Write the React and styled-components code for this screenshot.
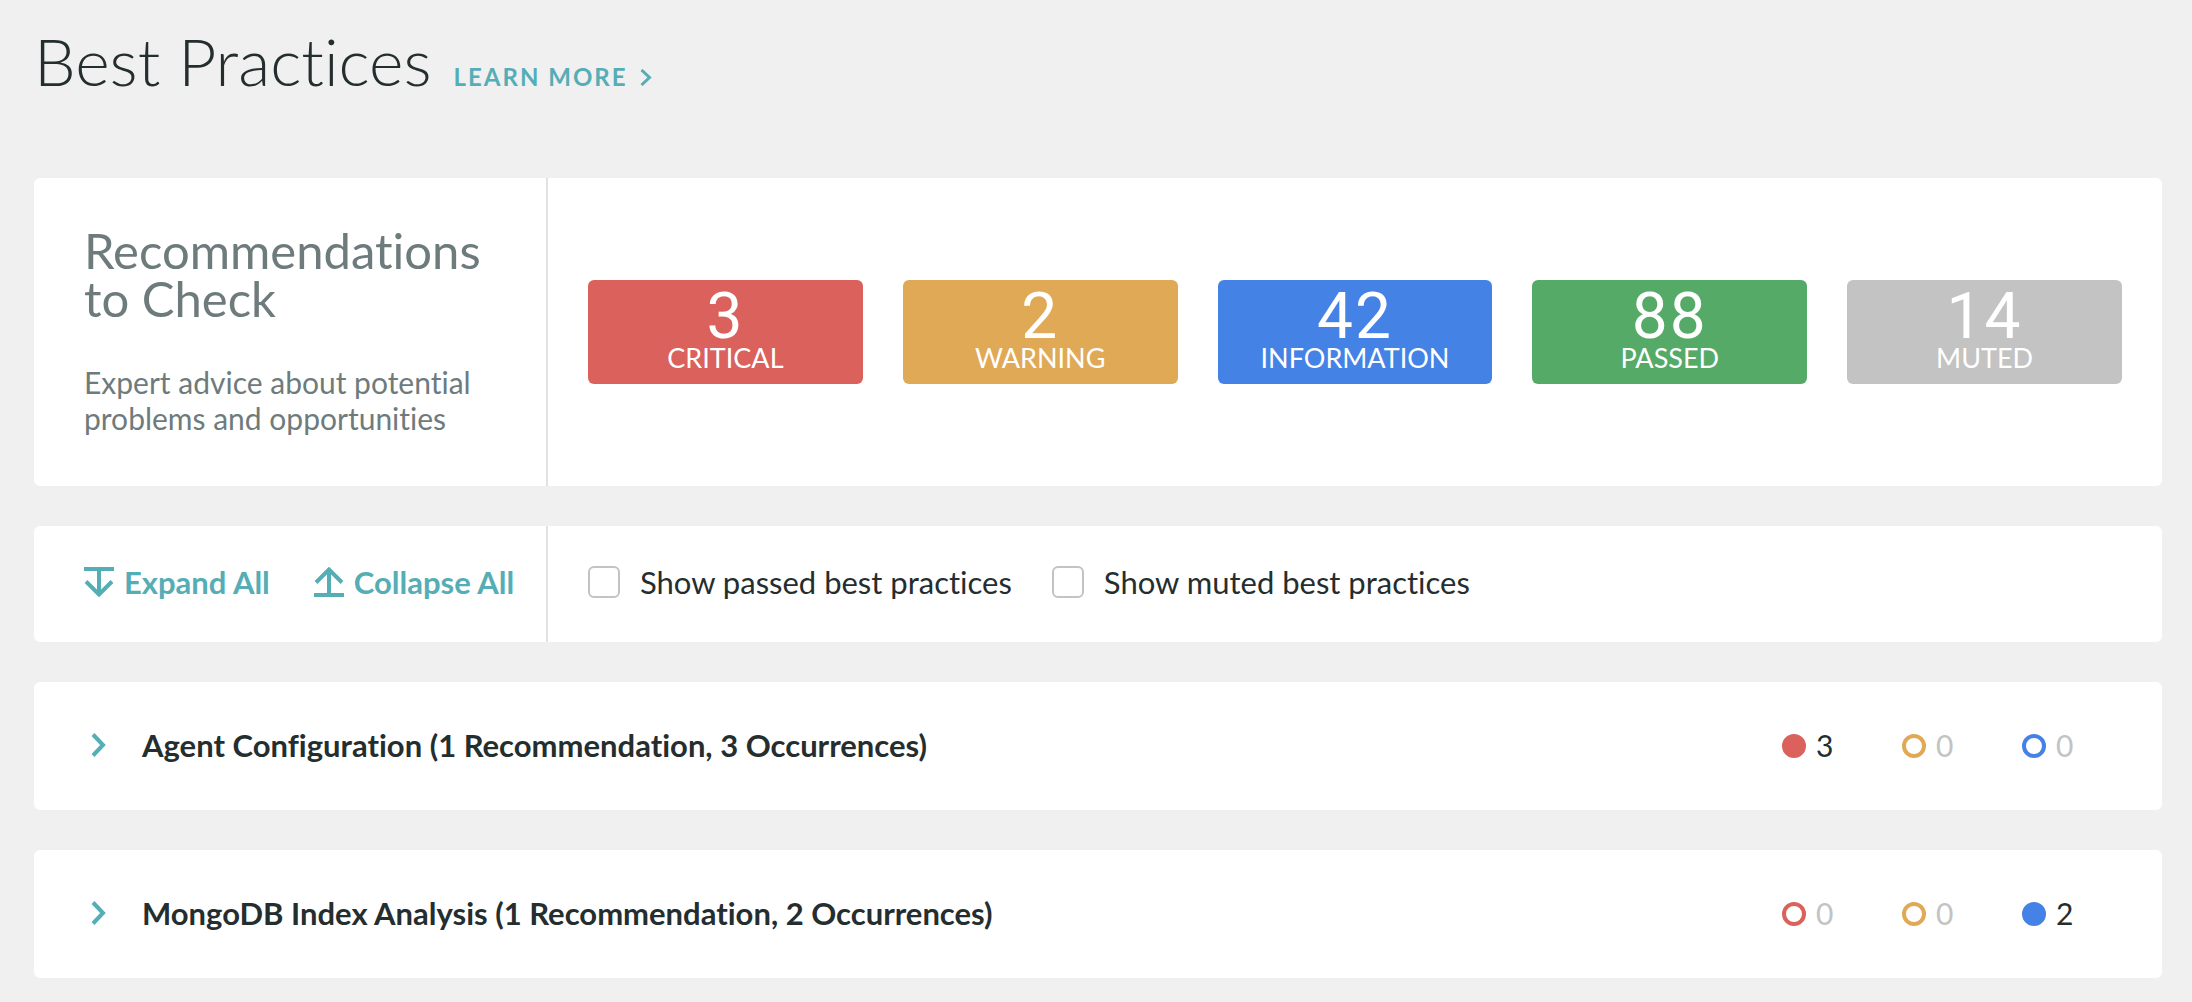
import styled, { createGlobalStyle } from 'styled-components';
import { useState } from 'react';

const GlobalStyle = createGlobalStyle`
	* {
		box-sizing: border-box;
	}

	body {
		margin: 0;
		background-color: #f0f0f0;
		color: #252e2f;
		font-family: Lato, sans-serif;
		font-variant-ligatures: none;
	}
`;

const Page = styled.main`
	display: flex;
	flex-direction: column;
	gap: 40px;
	padding: 30px 30px 24px 34px;
`;

const Header = styled.header`
	display: flex;
	align-items: baseline;
	gap: 22px;
	margin-bottom: 46px;
`;

const Title = styled.h1`
	margin: 0;
	font-size: 66px;
	font-weight: 300;
	line-height: 62px;
`;

const LearnMore = styled.a`
	display: flex;
	align-items: baseline;
	gap: 12px;
	color: #55adb6;
	font-size: 24px;
	font-weight: 700;
	letter-spacing: 2px;
	text-decoration: none;
	text-transform: uppercase;
`;

const Card = styled.section`
	display: flex;
	border-radius: 6px;
	background-color: white;
`;

const Side = styled.div`
	flex: none;
	width: 514px;
	border-right: 2px solid #e2e2e2;
`;

const Intro = styled(Side)`
	padding: 48px 28px 50px 50px;
	color: #6e7b7d;
`;

const Heading = styled.h2`
	margin: 0 0 42px;
	font-size: 49px;
	font-weight: 400;
	line-height: 48px;
`;

const Description = styled.p`
	margin: 0;
	font-size: 30px;
	line-height: 36px;
`;

const Badges = styled.div`
	flex: 1;
	display: grid;
	grid-template-columns: repeat(5, 1fr);
	align-items: center;
	gap: 40px;
	padding: 0 40px;
`;

const Badge = styled.div`
	display: flex;
	flex-direction: column;
	align-items: center;
	padding: 10px 0 12px;
	border-radius: 6px;
	background-color: ${({ $color }) => $color};
	color: white;
`;

const BadgeCount = styled.span`
	font-family: Roboto, sans-serif;
	font-size: 64px;
	letter-spacing: 2px;
	line-height: 54px;
`;

const BadgeLabel = styled.span`
	font-size: 27px;
	line-height: 28px;
	text-transform: uppercase;
`;

const Actions = styled(Side)`
	display: flex;
	gap: 44px;
	padding: 40px 0 44px 50px;
`;

const Action = styled.button`
	display: flex;
	align-items: center;
	gap: 10px;
	padding: 0;
	border: none;
	background: none;
	color: #55adb6;
	cursor: pointer;
	font: inherit;
	font-size: 31px;
	font-weight: 700;
	line-height: 32px;
	white-space: nowrap;
`;

const Filters = styled.div`
	display: flex;
	gap: 40px;
	padding: 40px 40px 44px;
`;

const Filter = styled.label`
	display: flex;
	align-items: center;
	gap: 20px;
	cursor: pointer;
	font-size: 31px;
	line-height: 32px;
`;

const Checkbox = styled.input`
	appearance: none;
	width: 32px;
	height: 32px;
	margin: 0;
	border: 2px solid #c3c3c3;
	border-radius: 6px;
	background-color: white;

	&:checked {
		border-color: #55adb6;
		background-color: #55adb6;
	}
`;

const Category = styled(Card)`
	justify-content: space-between;
	align-items: center;
	padding: 47px 20px 49px 50px;
`;

const CategoryTitle = styled.h3`
	margin: 0;
	font-size: 31px;
`;

const Toggle = styled.button`
	display: flex;
	align-items: center;
	gap: 30px;
	padding: 0;
	border: none;
	background: none;
	color: inherit;
	cursor: pointer;
	font: inherit;
	line-height: 32px;
	text-align: left;
`;

const ToggleIcon = styled.svg`
	flex: none;
	color: #55adb6;
	transform: ${({ $open }) => ($open ? 'rotate(90deg)' : 'none')};
`;

const Counts = styled.div`
	display: grid;
	grid-template-columns: repeat(3, 120px);
`;

const Count = styled.span`
	display: flex;
	align-items: center;
	gap: 10px;
	color: ${({ $empty }) => ($empty ? '#c3c3c3' : 'inherit')};
	font-size: 30px;
	line-height: 32px;
`;

const Dot = styled.span`
	width: 24px;
	height: 24px;
	margin-top: 2px;
	border: 4px solid ${({ $color }) => $color};
	border-radius: 50%;
	background-color: ${({ $color, $empty }) => ($empty ? 'white' : $color)};
`;

const RED = '#da615c';
const ORANGE = '#e0a955';
const BLUE = '#4582e6';

const badges = [
	{ label: 'Critical', count: 3, color: RED },
	{ label: 'Warning', count: 2, color: ORANGE },
	{ label: 'Information', count: 42, color: BLUE },
	{ label: 'Passed', count: 88, color: '#56aa67' },
	{ label: 'Muted', count: 14, color: '#c3c3c3' },
];

const categories = [
	{ name: 'Agent Configuration', recommendations: '1 Recommendation', occurrences: 3, counts: [3, 0, 0] },
	{ name: 'MongoDB Index Analysis', recommendations: '1 Recommendation', occurrences: 2, counts: [0, 0, 2] },
];

const countColors = [RED, ORANGE, BLUE];

const App = () => {
	const [showPassed, setShowPassed] = useState(false);
	const [showMuted, setShowMuted] = useState(false);
	const [open, setOpen] = useState([]);

	const toggle = (name) => {
		setOpen(open.includes(name) ? open.filter((n) => n !== name) : [...open, name]);
	};

	return (
		<Page>
			<GlobalStyle />
			<Header>
				<Title>Best Practices</Title>
				<LearnMore href="#learn-more">
					Learn More
					<svg width="12" height="17" viewBox="0 0 12 17" fill="none" stroke="currentColor" strokeWidth="3">
						<path d="M1.5 1 L9.5 8.5 L1.5 16" />
					</svg>
				</LearnMore>
			</Header>

			<Card>
				<Intro>
					<Heading>Recommendations to Check</Heading>
					<Description>Expert advice about potential problems and opportunities</Description>
				</Intro>
				<Badges>
					{badges.map(({ label, count, color }) => (
						<Badge key={label} $color={color}>
							<BadgeCount>{count}</BadgeCount>
							<BadgeLabel>{label}</BadgeLabel>
						</Badge>
					))}
				</Badges>
			</Card>

			<Card>
				<Actions>
					<Action type="button" onClick={() => setOpen(categories.map((c) => c.name))}>
						<svg width="30" height="30" viewBox="0 0 30 30" fill="none" stroke="currentColor" strokeWidth="4">
							<path d="M0 2 H30 M15 2 V27 M2 14.5 L15 27.5 L28 14.5" />
						</svg>
						Expand All
					</Action>
					<Action type="button" onClick={() => setOpen([])}>
						<svg width="30" height="30" viewBox="0 0 30 30" fill="none" stroke="currentColor" strokeWidth="4">
							<path d="M0 28 H30 M15 28 V3 M2 15.5 L15 2.5 L28 15.5" />
						</svg>
						Collapse All
					</Action>
				</Actions>
				<Filters>
					<Filter>
						<Checkbox type="checkbox" checked={showPassed} onChange={(e) => setShowPassed(e.target.checked)} />
						Show passed best practices
					</Filter>
					<Filter>
						<Checkbox type="checkbox" checked={showMuted} onChange={(e) => setShowMuted(e.target.checked)} />
						Show muted best practices
					</Filter>
				</Filters>
			</Card>

			{categories.map(({ name, recommendations, occurrences, counts }) => (
				<Category key={name}>
					<CategoryTitle>
						<Toggle type="button" aria-expanded={open.includes(name)} onClick={() => toggle(name)}>
							<ToggleIcon
								$open={open.includes(name)}
								width="28"
								height="30"
								viewBox="0 0 28 30"
								fill="none"
								stroke="currentColor"
								strokeWidth="4"
							>
								<path d="M9 4.5 L19 15 L9 25.5" />
							</ToggleIcon>
							{`${name} (${recommendations}, ${occurrences} Occurrences)`}
						</Toggle>
					</CategoryTitle>
					<Counts>
						{counts.map((count, i) => (
							<Count key={countColors[i]} $empty={count === 0}>
								<Dot $color={countColors[i]} $empty={count === 0} />
								{count}
							</Count>
						))}
					</Counts>
				</Category>
			))}
		</Page>
	);
};

export default App;
